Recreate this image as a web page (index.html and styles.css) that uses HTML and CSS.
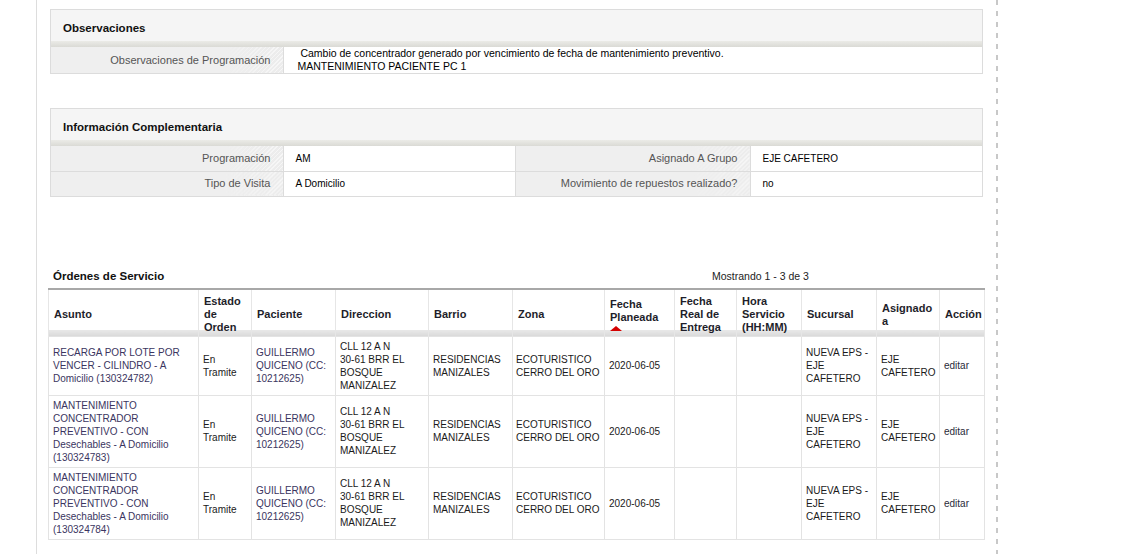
FILE: index.html
```html
<!DOCTYPE html>
<html>

<head>
    <meta charset="utf-8">
    <link rel="stylesheet" href="styles.css">
</head>

<body>
    <div class="page">
        <div class="panel">
            <div class="panel-head">Observaciones</div>
            <table class="form">
                <colgroup>
                    <col class="c-label">
                    <col>
                </colgroup>
                <tr>
                    <td class="label">Observaciones de Programación</td>
                    <td class="value obs">&nbsp;Cambio de concentrador generado por vencimiento de fecha de mantenimiento preventivo.<br>MANTENIMIENTO PACIENTE PC 1</td>
                </tr>
            </table>
        </div>

        <div class="panel info">
            <div class="panel-head">Información Complementaria</div>
            <table class="form">
                <colgroup>
                    <col class="c-label">
                    <col class="c-value">
                    <col class="c-label2">
                    <col>
                </colgroup>
                <tr>
                    <td class="label">Programación</td>
                    <td class="value">AM</td>
                    <td class="label">Asignado A Grupo</td>
                    <td class="value">EJE CAFETERO</td>
                </tr>
                <tr>
                    <td class="label">Tipo de Visita</td>
                    <td class="value">A Domicilio</td>
                    <td class="label">Movimiento de repuestos realizado?</td>
                    <td class="value">no</td>
                </tr>
            </table>
        </div>

        <div class="orders">
            <div class="orders-head">
                <span class="orders-title">Órdenes de Servicio</span>
                <span class="orders-count">Mostrando 1 - 3 de 3</span>
            </div>
            <table class="grid">
                <colgroup>
                    <col style="width:150px">
                    <col style="width:53px">
                    <col style="width:84px">
                    <col style="width:93px">
                    <col style="width:84px">
                    <col style="width:92px">
                    <col style="width:70px">
                    <col style="width:62px">
                    <col style="width:65px">
                    <col style="width:75px">
                    <col style="width:63px">
                    <col style="width:45px">
                </colgroup>
                <tr>
                    <th>Asunto</th>
                    <th>Estado de Orden</th>
                    <th>Paciente</th>
                    <th>Direccion</th>
                    <th>Barrio</th>
                    <th>Zona</th>
                    <th>Fecha Planeada<span class="sort-up"></span></th>
                    <th>Fecha Real de Entrega</th>
                    <th>Hora Servicio (HH:MM)</th>
                    <th>Sucursal</th>
                    <th>Asignado a</th>
                    <th>Acción</th>
                </tr>
                <tr>
                    <td class="link">RECARGA POR LOTE POR VENCER - CILINDRO - A Domicilio (130324782)</td>
                    <td>En Tramite</td>
                    <td class="link">GUILLERMO QUICENO (CC: 10212625)</td>
                    <td class="dir">CLL 12 A N 30-61 BRR EL BOSQUE MANIZALEZ</td>
                    <td>RESIDENCIAS MANIZALES</td>
                    <td class="zona">ECOTURISTICO CERRO DEL ORO</td>
                    <td>2020-06-05</td>
                    <td></td>
                    <td></td>
                    <td>NUEVA EPS - EJE CAFETERO</td>
                    <td>EJE CAFETERO</td>
                    <td class="act">editar</td>
                </tr>
                <tr>
                    <td class="link">MANTENIMIENTO CONCENTRADOR PREVENTIVO - CON Desechables - A Domicilio (130324783)</td>
                    <td>En Tramite</td>
                    <td class="link">GUILLERMO QUICENO (CC: 10212625)</td>
                    <td class="dir">CLL 12 A N 30-61 BRR EL BOSQUE MANIZALEZ</td>
                    <td>RESIDENCIAS MANIZALES</td>
                    <td class="zona">ECOTURISTICO CERRO DEL ORO</td>
                    <td>2020-06-05</td>
                    <td></td>
                    <td></td>
                    <td>NUEVA EPS - EJE CAFETERO</td>
                    <td>EJE CAFETERO</td>
                    <td class="act">editar</td>
                </tr>
                <tr>
                    <td class="link">MANTENIMIENTO CONCENTRADOR PREVENTIVO - CON Desechables - A Domicilio (130324784)</td>
                    <td>En Tramite</td>
                    <td class="link">GUILLERMO QUICENO (CC: 10212625)</td>
                    <td class="dir">CLL 12 A N 30-61 BRR EL BOSQUE MANIZALEZ</td>
                    <td>RESIDENCIAS MANIZALES</td>
                    <td class="zona">ECOTURISTICO CERRO DEL ORO</td>
                    <td>2020-06-05</td>
                    <td></td>
                    <td></td>
                    <td>NUEVA EPS - EJE CAFETERO</td>
                    <td>EJE CAFETERO</td>
                    <td class="act">editar</td>
                </tr>
            </table>
        </div>
    </div>
</body>

</html>
```

FILE: styles.css
```css
* {
    padding: 0;
    margin: 0;
    box-sizing: border-box;
}

body {
    font-family: "Liberation Sans", Arial, sans-serif;
    font-size: 11px;
    color: #222;
    background: #fff;
}

/* contenedor con linea izquierda y borde punteado a la derecha */
.page {
    margin-left: 36px;
    width: 962px;
    min-height: 554px;
    padding: 9px 0 0 11px;
    border-left: 1px solid #ddd;
    background: linear-gradient(#c8c8c8 5px, transparent 5px) right top / 2px 11px repeat-y;
}

.panel {
    width: 933px;
    margin-left: 2px;
    border: 1px solid #dcdcdc;
}

.panel + .panel {
    margin-top: 34px;
}

.panel-head {
    height: 37px;
    padding: 11px 12px 0;
    font-size: 11.5px;
    line-height: 14px;
    font-weight: bold;
    color: #111;
    background: linear-gradient(to bottom, #f5f5f5 31px, #ebebe7 31px, #dadad5 37px);
}

.form {
    width: 100%;
    border-collapse: collapse;
    table-layout: fixed;
}

.form .c-label {
    width: 232px;
}

.form .c-value {
    width: 232px;
}

.form .c-label2 {
    width: 235px;
}

.form td {
    height: 25px;
    line-height: 13px;
    vertical-align: middle;
    border-left: 1px solid #dcdcdc;
}

.form tr + tr td {
    border-top: 1px solid #dcdcdc;
}

.form td:first-child {
    border-left: 0;
}

.form .label {
    text-align: right;
    padding-right: 12px;
    font-size: 11px;
    color: #555;
    background-color: #efefef;
    background-image: linear-gradient(to right, #efefef 75%, rgba(239, 239, 239, 0)),
        repeating-linear-gradient(-45deg, #f7f7f7 0 1px, #ececec 1px 3px);
}

.form .value {
    padding-left: 12px;
    font-size: 10px;
    color: #000;
    background: #fff;
}

.form .obs {
    height: 26px;
    padding-left: 14px;
    font-size: 10.5px;
    line-height: 13px;
}

.orders {
    margin-top: 72px;
    width: 936px;
}

.orders-head {
    display: grid;
    grid-template-columns: 664px auto;
    line-height: 14px;
}

.orders-title {
    padding-left: 5px;
    font-size: 11.5px;
    font-weight: bold;
    color: #111;
}

.orders-count {
    font-size: 10.5px;
    color: #222;
}

.grid {
    margin-top: 5px;
    width: 936px;
    border-collapse: collapse;
    table-layout: fixed;
    border-top: 2px solid #a8a8a8;
}

.grid th {
    height: 47px;
    padding: 4px 3px 0 5px;
    text-align: left;
    vertical-align: middle;
    font-size: 11px;
    line-height: 13px;
    font-weight: bold;
    color: #1e1e2a;
    border-left: 1px solid #e6e6e6;
    border-right: 1px solid #e6e6e6;
    background: linear-gradient(to top, #dadada 0, #e8e8e8 6px, #fff 6px);
}

.grid td {
    padding: 3px 4px;
    font-size: 10px;
    line-height: 13px;
    vertical-align: middle;
    color: #1a1a1a;
    border: 1px solid #e3e3e3;
}

.grid td.link {
    color: #3a3560;
}

.grid td.dir {
    padding-right: 22px;
}

.grid td.zona {
    padding: 3px 2px 3px 3px;
}

.grid td.act {
    color: #2a2a3a;
}

.sort-up {
    display: block;
    width: 0;
    height: 0;
    margin-top: 2px;
    border-left: 6px solid transparent;
    border-right: 6px solid transparent;
    border-bottom: 5px solid #d40000;
}
```
